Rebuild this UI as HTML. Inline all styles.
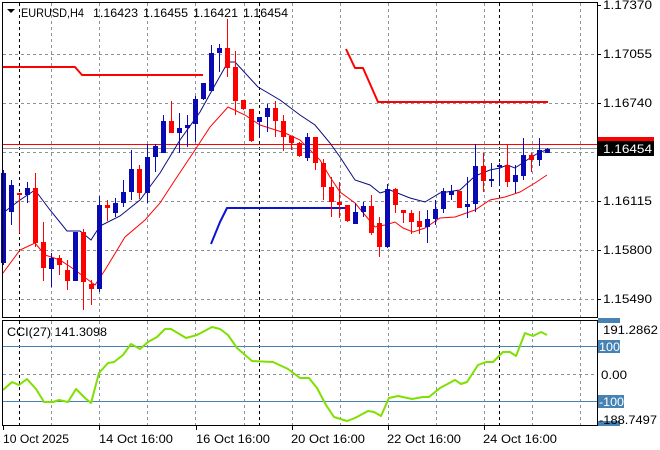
<!DOCTYPE html>
<html><head><meta charset="utf-8"><style>
html,body{margin:0;padding:0;background:#fff;}
svg{display:block;font-family:"Liberation Sans",sans-serif;}
</style></head><body>
<svg width="660" height="450" viewBox="0 0 660 450" xmlns="http://www.w3.org/2000/svg">
<rect width="660" height="450" fill="#fff"/>
<g stroke="#8a929c" stroke-width="1" stroke-dasharray="3,3" fill="none">
<path d="M3 54.5H597M3 103.5H597M3 152.5H597M3 201.5H597M3 250.5H597M3 299.5H597"/>
<path d="M51.5 3V317M99.5 3V317M147.5 3V317M195.5 3V317M244.5 3V317M292.5 3V317M340.5 3V317M388.5 3V317M436.5 3V317M484.5 3V317M532.5 3V317M580.5 3V317"/>
<path d="M51.5 321V425M99.5 321V425M147.5 321V425M195.5 321V425M244.5 321V425M292.5 321V425M340.5 321V425M388.5 321V425M436.5 321V425M484.5 321V425M532.5 321V425M580.5 321V425M3 374.5H597"/>
</g>
<g stroke="#000" stroke-width="1" stroke-dasharray="3,3" fill="none">
<path d="M19.5 3V317M259.5 3V317M499.5 3V317M19.5 321V425M259.5 321V425M499.5 321V425"/>
</g>
<path d="M3 144.5H597" stroke="#ff0000" stroke-width="1"/>
<path d="M3 148.5H597" stroke="#8c96a0" stroke-width="1"/>
<g fill="none" stroke-width="2" stroke-linejoin="round">
<path d="M3 67H75L82 75H203" stroke="#ff0000"/>
<path d="M346 49L355 68H363L378 102H548" stroke="#ff0000"/>
<path d="M211 244L220 222L227 208H347" stroke="#0a14d2"/>
</g>
<polyline fill="none" stroke="#0a0a80" stroke-width="1" points="3,213 20,200 35,190 50,210 67,231 80,231 91,240 100,226 120,216 140,200 160,173 180,140 200,112 215,85 228,62 235,62 258,87 280,100 300,115 315,125 330,143 340,157 355,180 370,185 380,193 390,190 410,198 425,202 440,193 460,190 475,176 490,170 500,168 507,165 515,168 530,158 540,152 547,150"/>
<polyline fill="none" stroke="#ff0000" stroke-width="1" points="3,273 20,250 35,243 45,255 60,260 75,270 95,285 105,270 125,237 145,220 160,203 175,180 195,150 210,127 228,107 245,115 260,125 285,133 300,140 320,160 330,177 340,192 355,203 365,215 375,227 385,225 395,222 403,228 413,232 425,228 440,218 455,217 475,210 490,200 505,197 520,192 535,183 547,175"/>
<g stroke="#0a0ab4" stroke-width="1">
<path d="M3.5 170V265M11.5 180V225M27.5 182V203M51.5 253V287M75.5 232V281M99.5 196V292M115.5 198V217M123.5 180V207M131.5 150V200M147.5 144V203M155.5 144V172M163.5 115V153M179.5 113V153M187.5 115V147M195.5 96V142M203.5 83V100M211.5 45V91M219.5 44V72M259.5 117V138M267.5 104V132M307.5 133V161M355.5 203V224M363.5 202V217M387.5 184V248M427.5 210V243M435.5 200V225M443.5 188V213M451.5 185V200M467.5 177V218M475.5 144V212M491.5 163V187M499.5 163V185M515.5 165V193M523.5 138V180M539.5 138V166M547.5 148V153"/>
</g>
<g fill="#0a0ab4">
<rect x="1" y="173" width="5" height="90"/><rect x="9" y="185" width="5" height="27"/><rect x="25" y="188" width="5" height="7"/><rect x="49" y="258" width="5" height="11"/><rect x="73" y="232" width="5" height="49"/><rect x="97" y="205" width="5" height="84"/><rect x="113" y="203" width="5" height="10"/><rect x="121" y="192" width="5" height="11"/><rect x="129" y="169" width="5" height="23"/><rect x="145" y="157" width="5" height="36"/><rect x="153" y="146" width="5" height="11"/><rect x="161" y="121" width="5" height="32"/><rect x="177" y="128" width="5" height="5"/><rect x="185" y="125" width="5" height="3"/><rect x="193" y="99" width="5" height="25"/><rect x="201" y="83" width="5" height="16"/><rect x="209" y="53" width="5" height="38"/><rect x="217" y="48" width="5" height="5"/><rect x="257" y="117" width="5" height="5"/><rect x="265" y="108" width="5" height="9"/><rect x="305" y="137" width="5" height="21"/><rect x="353" y="212" width="5" height="12"/><rect x="361" y="206" width="5" height="6"/><rect x="385" y="189" width="5" height="58"/><rect x="425" y="219" width="5" height="8"/><rect x="433" y="209" width="5" height="10"/><rect x="441" y="191" width="5" height="18"/><rect x="449" y="191" width="5" height="4"/><rect x="465" y="204" width="5" height="3"/><rect x="473" y="166" width="5" height="38"/><rect x="489" y="179" width="5" height="2"/><rect x="497" y="165" width="5" height="2"/><rect x="513" y="175" width="5" height="7"/><rect x="521" y="155" width="5" height="21"/><rect x="537" y="150" width="5" height="10"/><rect x="545" y="149" width="5" height="4"/>
</g>
<g stroke="#ff0000" stroke-width="1">
<path d="M19.5 193V233M35.5 173V247M43.5 222V281M59.5 255V275M67.5 260V290M83.5 229V310M91.5 280V305M107.5 200V221M139.5 165V199M171.5 101V133M227.5 19V77M235.5 51V115M243.5 100V110M251.5 109V142M275.5 101V137M283.5 115V151M291.5 136V150M299.5 142V157M315.5 137V170M323.5 159V200M331.5 177V217M339.5 182V218M347.5 205V222M371.5 195V235M379.5 217V257M395.5 188V213M403.5 210V223M411.5 210V234M419.5 211V234M459.5 191V208M483.5 153V192M507.5 144V187M531.5 153V172"/>
</g>
<g fill="#ff0000">
<rect x="17" y="193" width="5" height="2"/><rect x="33" y="188" width="5" height="55"/><rect x="41" y="242" width="5" height="26"/><rect x="57" y="258" width="5" height="7"/><rect x="65" y="270" width="5" height="11"/><rect x="81" y="232" width="5" height="50"/><rect x="89" y="284" width="5" height="5"/><rect x="105" y="205" width="5" height="3"/><rect x="137" y="169" width="5" height="24"/><rect x="169" y="121" width="5" height="12"/><rect x="225" y="48" width="5" height="20"/><rect x="233" y="67" width="5" height="34"/><rect x="241" y="100" width="5" height="9"/><rect x="249" y="109" width="5" height="32"/><rect x="273" y="108" width="5" height="13"/><rect x="281" y="121" width="5" height="16"/><rect x="289" y="136" width="5" height="7"/><rect x="297" y="143" width="5" height="13"/><rect x="313" y="137" width="5" height="26"/><rect x="321" y="163" width="5" height="24"/><rect x="329" y="187" width="5" height="15"/><rect x="337" y="202" width="5" height="3"/><rect x="345" y="205" width="5" height="16"/><rect x="369" y="206" width="5" height="27"/><rect x="377" y="223" width="5" height="24"/><rect x="393" y="189" width="5" height="16"/><rect x="401" y="210" width="5" height="3"/><rect x="409" y="213" width="5" height="9"/><rect x="417" y="221" width="5" height="6"/><rect x="457" y="191" width="5" height="17"/><rect x="481" y="166" width="5" height="15"/><rect x="505" y="165" width="5" height="17"/><rect x="529" y="155" width="5" height="5"/>
</g>
<path d="M3 346.5H597M3 401.5H597" stroke="#4682b4" stroke-width="1"/>
<polyline fill="none" stroke="#7fe000" stroke-width="2" stroke-linejoin="round" points="3,390 12,382 19,385 27,379 36,389 44,402 53,402 59,400 68,402 76,389 85,398 91,403 99,373 108,363 114,362 123,355 131,344 140,349 148,342 157,337 165,329 171,329 186,338 197,335 212,327 220,329 228,335 237,348 252,361 273,362 288,369 300,378 309,378 317,388 326,405 334,417 347,421 355,418 368,411 374,412 381,416 389,398 398,396 412,399 423,397 429,397 440,388 455,380 461,384 467,382 478,365 486,362 493,362 503,352 510,352 516,356 525,333 533,336 541,332 547,335"/>
<rect x="2.5" y="2.5" width="595" height="315" fill="none" stroke="#000"/>
<rect x="2.5" y="320.5" width="595" height="105" fill="none" stroke="#000"/>
<path d="M597 5.5h4M597 54.5h4M597 103.5h4M597 152.5h4M597 201.5h4M597 250.5h4M597 299.5h4M3.5 426v4M99.5 426v4M196.5 426v4M292.5 426v4M388.5 426v4M484.5 426v4" stroke="#000"/>
<g font-size="12" fill="#000">
<text x="603" y="9" textLength="49" lengthAdjust="spacingAndGlyphs">1.17370</text>
<text x="603" y="58" textLength="49" lengthAdjust="spacingAndGlyphs">1.17055</text>
<text x="603" y="107" textLength="49" lengthAdjust="spacingAndGlyphs">1.16740</text>
<text x="603" y="205" textLength="49" lengthAdjust="spacingAndGlyphs">1.16115</text>
<text x="603" y="254" textLength="49" lengthAdjust="spacingAndGlyphs">1.15800</text>
<text x="603" y="303" textLength="49" lengthAdjust="spacingAndGlyphs">1.15490</text>
</g>
<rect x="598" y="137" width="56" height="6" fill="#ff0000"/>
<rect x="598" y="141" width="56" height="15" fill="#000"/>
<text x="603" y="153" font-size="12" fill="#fff" textLength="49" lengthAdjust="spacingAndGlyphs">1.16454</text>
<path d="M7 9h8l-4 4z" fill="#000"/>
<g font-size="12" fill="#000">
<text x="21" y="17" textLength="63" lengthAdjust="spacingAndGlyphs">EURUSD,H4</text>
<text x="93" y="17" textLength="45" lengthAdjust="spacingAndGlyphs">1.16423</text>
<text x="143" y="17" textLength="45" lengthAdjust="spacingAndGlyphs">1.16455</text>
<text x="193" y="17" textLength="45" lengthAdjust="spacingAndGlyphs">1.16421</text>
<text x="243" y="17" textLength="45" lengthAdjust="spacingAndGlyphs">1.16454</text>
<text x="7" y="336" textLength="100" lengthAdjust="spacingAndGlyphs">CCI(27) 141.3098</text>
</g>
<rect x="598" y="318" width="22" height="5" fill="#4682b4"/>
<rect x="598" y="421" width="22" height="5" fill="#4682b4"/>
<rect x="598" y="340" width="22" height="13" fill="#4682b4"/>
<rect x="598" y="395" width="26" height="13" fill="#4682b4"/>
<g font-size="12" fill="#000">
<text x="603" y="334" textLength="55" lengthAdjust="spacingAndGlyphs">191.2862</text>
<text x="599" y="351" fill="#fff" textLength="21" lengthAdjust="spacingAndGlyphs">100</text>
<text x="601" y="379" textLength="26" lengthAdjust="spacingAndGlyphs">0.00</text>
<text x="599" y="406" fill="#fff" textLength="25" lengthAdjust="spacingAndGlyphs">-100</text>
<text x="599" y="424" textLength="58" lengthAdjust="spacingAndGlyphs">-188.7497</text>
</g>
<g font-size="12" fill="#000">
<text x="3" y="443" textLength="66" lengthAdjust="spacingAndGlyphs">10 Oct 2025</text>
<text x="99" y="443" textLength="74" lengthAdjust="spacingAndGlyphs">14 Oct 16:00</text>
<text x="196" y="443" textLength="74" lengthAdjust="spacingAndGlyphs">16 Oct 16:00</text>
<text x="291" y="443" textLength="74" lengthAdjust="spacingAndGlyphs">20 Oct 16:00</text>
<text x="387" y="443" textLength="74" lengthAdjust="spacingAndGlyphs">22 Oct 16:00</text>
<text x="483" y="443" textLength="74" lengthAdjust="spacingAndGlyphs">24 Oct 16:00</text>
</g>
</svg>
</body></html>
